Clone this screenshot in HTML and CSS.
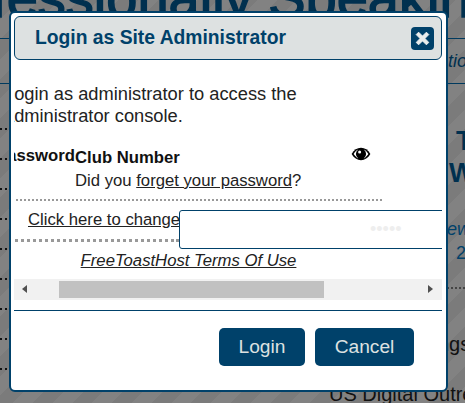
FILE: index.html
```html
<!DOCTYPE html>
<html lang="en">
<head>
    <meta charset="UTF-8">
    <meta name="viewport" content="width=device-width, initial-scale=1.0">
    <title>Login as Site Administrator</title>
    <link rel="stylesheet" href="styles.css">
</head>
<body>

    <div class="page">
        <h1 class="page-title">Professionally Speaking</h1>
        <div class="page-columns">
            <div class="left-rows">
                <div class="blue-row"></div>
                <div class="blue-row"></div>
                <div class="dot-row first"></div>
                <div class="dot-row"></div>
                <div class="dot-row"></div>
                <div class="dot-row"></div>
                <div class="dot-row"></div>
                <div class="dot-row"></div>
                <div class="dot-row"></div>
                <div class="dot-row"></div>
                <div class="dot-row"></div>
                <div class="stem"></div>
            </div>
            <div class="right-col">
                <div class="top-line"></div>
                <div class="tag-row"><em>Information</em></div>
                <div class="big-title"><span class="big-t">The</span><br><span class="big-w">Web</span></div>
                <div class="news"><em>ewsletter</em><br><span>2024</span></div>
                <div class="dot-line"></div>
                <div class="meeting">Meetings</div>
                <div class="outreach">US Digital Outreach</div>
            </div>
        </div>
    </div>

    <div class="modal">
        <div class="modal-header">
            <h2>Login as Site Administrator</h2>
            <button type="button" class="close-btn" aria-label="Close">
                <svg width="15" height="15" viewBox="0 0 15 15"><path d="M3.6 1.2 7.5 5.1 11.4 1.2 13.8 3.6 9.9 7.5 13.8 11.4 11.4 13.8 7.5 9.9 3.6 13.8 1.2 11.4 5.1 7.5 1.2 3.6Z" fill="#e9eded" stroke="#e9eded" stroke-linejoin="round"/></svg>
            </button>
        </div>

        <div class="modal-body">
            <div class="wide">
                <p class="intro">Login as administrator to access the<br>administrator console.</p>

                <div class="field-row">
                    <label class="pass-label">Password</label>
                    <label class="club-label">Club Number</label>
                    <svg class="eye" width="20" height="14" viewBox="0 0 20 14">
                        <path d="M0.6 7C3 3 6.2 0.8 10 0.8S17 3 19.4 7C17 11 13.8 13.2 10 13.2S3 11 0.6 7Z" fill="#000"/>
                        <path d="M2.6 7C4.6 4.2 6 3.1 7.2 2.6A5.4 5.4 0 0 0 7.2 11.4C6 10.9 4.6 9.8 2.6 7ZM17.4 7C15.4 4.2 14 3.1 12.8 2.6A5.4 5.4 0 0 1 12.8 11.4C14 10.9 15.4 9.8 17.4 7Z" fill="#fff"/>
                        <circle cx="8.6" cy="5" r="1.5" fill="#fff"/>
                    </svg>
                </div>
                <div class="forgot">Did you <a href="#">forget your password</a>?</div>

                <div class="change-row">
                    <div class="change-cell"><a href="#">Click here to change</a></div>
                    <input type="password" class="pass-input" value="12345">
                </div>

                <div class="terms"><a href="#">FreeToastHost Terms Of Use</a></div>
            </div>
        </div>

        <div class="scrollbar">
            <span class="arrow left"></span>
            <div class="track"><div class="thumb"></div></div>
            <span class="arrow right"></span>
        </div>

        <div class="modal-footer">
            <button type="button" class="btn login">Login</button>
            <button type="button" class="btn cancel">Cancel</button>
        </div>
    </div>

</body>
</html>
```

FILE: styles.css
```css
html, body {
    margin: 0;
    padding: 0;
    height: 100%;
    overflow: hidden;
}

body {
    font-family: "Liberation Sans", Arial, sans-serif;
    color: #222;
}

.page {
    width: 465px;
    height: 403px;
    overflow: hidden;
    background-color: #7f7f7f;
    background-image: repeating-linear-gradient(135deg, #7b7b7b 0, #7b7b7b 14px, #828282 14px, #828282 28px);
}

.page-title {
    margin: -32px 0 -10px -96px;
    width: 700px;
    font-size: 56px;
    line-height: 60px;
    font-weight: normal;
    white-space: nowrap;
    color: #00304f;
    -webkit-text-stroke: 1.5px #00304f;
}

.page-columns {
    display: flex;
}

/* only the 9px left of the modal shows */
.left-rows {
    width: 447px;
    flex-shrink: 0;
}

.blue-row {
    height: 45px;
    box-sizing: border-box;
    border-bottom: 1px solid #003a5e;
}

.blue-row:first-child {
    height: 21px;
}

.dot-row {
    height: 30px;
    box-sizing: border-box;
    border-bottom: 2px dotted #111;
}

.dot-row.first {
    height: 46px;
}

.stem {
    width: 2px;
    height: 20px;
    margin-left: 64px;
    background-color: #00304f;
}

.right-col {
    width: 18px;
    white-space: nowrap;
    color: #00304f;
}

.top-line {
    height: 21px;
    box-sizing: border-box;
    border-bottom: 1px solid #003a5e;
}

.tag-row {
    height: 45px;
    box-sizing: border-box;
    padding-top: 12px;
    margin-left: -60px;
    font-size: 18px;
    background: linear-gradient(#003a5e, #003a5e) right bottom / 18px 1px no-repeat;
}

.big-title {
    margin-top: 41px;
    font-size: 27px;
    line-height: 32px;
    font-weight: bold;
}

.big-t {
    margin-left: 9px;
}

.big-w {
    margin-left: 2px;
}

.news {
    margin-top: 28px;
    font-size: 18px;
    line-height: 24px;
    color: #00416a;
}

.news span {
    margin-left: 9px;
}

.dot-line {
    margin-top: 22px;
    border-top: 2px dotted #444;
}

.meeting {
    margin: 44px 0 0 -58px;
    font-size: 20px;
    color: #111;
}

.outreach {
    margin: 27px 0 0 -118px;
    font-size: 20px;
    color: #111;
}

.modal {
    position: absolute;
    left: 9px;
    top: 11px;
    width: 439px;
    height: 381px;
    box-sizing: border-box;
    padding: 3px 4px 0 3px;
    background-color: #fff;
    border: 2px solid #00416a;
    border-radius: 6px;
}

.modal-header {
    display: flex;
    align-items: center;
    justify-content: space-between;
    height: 44px;
    box-sizing: border-box;
    padding: 0 7px 0 20px;
    background-color: #dde1e1;
    border: 1px solid #00416a;
    border-radius: 6px;
}

.modal-header h2 {
    margin: 0;
    font-size: 19.3px;
    color: #00416a;
}

.close-btn {
    display: flex;
    align-items: center;
    justify-content: center;
    width: 23px;
    height: 23px;
    padding: 0;
    border: none;
    border-radius: 4px;
    background-color: #00416a;
}

.modal-body {
    height: 219px;
    overflow: hidden;
}

.wide {
    width: 520px;
    margin-left: -10px;
    font-size: 16.7px;
}

.intro {
    margin: 0;
    padding-top: 23px;
    font-size: 18.3px;
    line-height: 22px;
}

.field-row {
    display: flex;
    align-items: flex-start;
    margin-top: 19px;
    height: 25px;
    font-weight: bold;
    color: #111;
}

.pass-label {
    width: 79px;
    margin-left: -8px;
}

.club-label {
    padding-top: 2px;
    width: 276px;
}

.eye {
    margin-top: 1px;
}

.forgot {
    width: 378px;
    height: 30px;
    box-sizing: border-box;
    padding-left: 71px;
    line-height: 20px;
    border-bottom: 2px dotted #999;
}

.forgot a, .change-cell a, .terms a {
    color: #222;
}

.change-row {
    display: flex;
    align-items: flex-start;
    margin-top: 9px;
    height: 40px;
}

.change-cell {
    width: 175px;
    flex-shrink: 0;
    height: 32px;
    box-sizing: border-box;
    padding: 0 0 0 24px;
    line-height: 20px;
    white-space: nowrap;
    border-bottom: 3px dotted #999;
}

.pass-input {
    flex-shrink: 0;
    width: 300px;
    height: 39px;
    box-sizing: border-box;
    padding: 0 0 0 190px;
    border: 1px solid #00416a;
    border-radius: 3px 0 0 3px;
    background-color: #fff;
    color: #eee;
    font-size: 18px;
    outline: none;
}

.terms {
    width: 369px;
    margin-top: 1px;
    text-align: center;
    font-style: italic;
}

.scrollbar {
    display: flex;
    align-items: stretch;
    height: 21px;
    background-color: #f1f1f1;
}

.arrow {
    position: relative;
    width: 20px;
    flex-shrink: 0;
}

.arrow::before {
    content: "";
    position: absolute;
    top: 6px;
    border-top: 4.5px solid transparent;
    border-bottom: 4.5px solid transparent;
}

.arrow.left::before {
    left: 8px;
    border-right: 5px solid #505050;
}

.arrow.right::before {
    left: 6px;
    border-left: 5px solid #505050;
}

.track {
    flex: 1;
    padding: 2px 0;
}

.thumb {
    width: 265px;
    height: 17px;
    margin-left: 25px;
    background-color: #c1c1c1;
}

.modal-footer {
    display: flex;
    justify-content: flex-end;
    gap: 10px;
    height: 56px;
    margin-top: 10px;
    padding: 17px 28px 0 0;
    border-top: 1px solid #00416a;
}

.btn {
    height: 38px;
    border: none;
    border-radius: 5px;
    background-color: #00416a;
    color: #dde1e1;
    font-family: "Liberation Sans", Arial, sans-serif;
    font-size: 19.2px;
}

.btn.login {
    width: 86px;
}

.btn.cancel {
    width: 99px;
}
```
